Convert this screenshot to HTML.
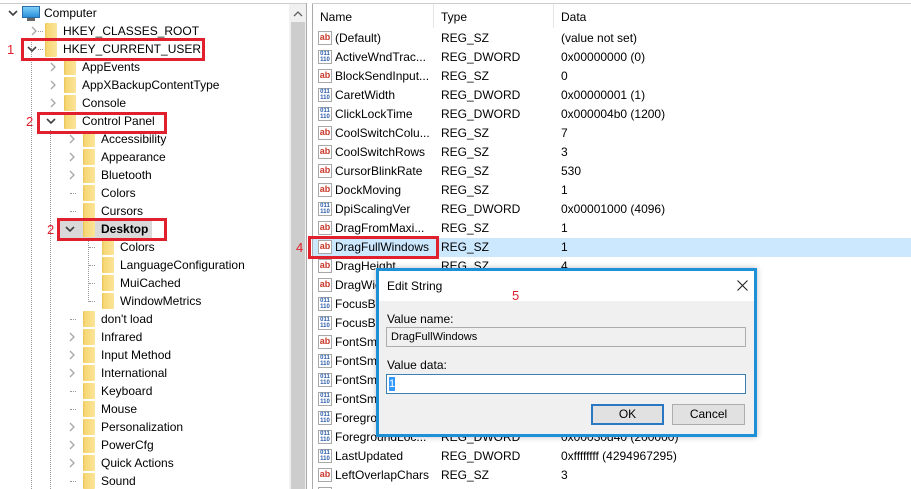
<!DOCTYPE html>
<html><head><meta charset="utf-8"><style>
*{margin:0;padding:0;box-sizing:border-box}
html{width:911px;height:489px;overflow:hidden}
body{width:911px;height:489px;overflow:hidden;background:#fff;font-family:"Liberation Sans",sans-serif;font-size:12px;color:#000;position:relative}
.a{position:absolute;white-space:nowrap}
.t{position:absolute;white-space:nowrap;line-height:18px;height:18px}
.f{position:absolute;width:12px;height:16px;background:linear-gradient(90deg,#e8c25a 0,#f7d774 2px,#fbe49a 100%);border-radius:1px}
.c{position:absolute;width:8px;height:10px}
.e{position:absolute;width:10px;height:8px}
.dot{position:absolute;border-top:1px dotted #999;width:6px}
.vd{position:absolute;border-left:1px dotted #999}
.r{position:absolute;height:19px;line-height:19px;white-space:nowrap}
.ic{position:absolute;width:14px;height:14px;top:2px;border:1px solid #a8a8a8;background:#fff;font-size:9px;font-weight:bold;line-height:11px;text-align:center}
.ab{color:#c8382a}
.dw{color:#2a5aa8;font-size:6px;line-height:6px}
.red{position:absolute;border:3px solid #e0202c}
.num{position:absolute;color:#e0202c;font-size:13px}
</style></head><body>
<svg width="0" height="0" style="position:absolute"><defs>
<symbol id="col" viewBox="0 0 8 10"><path d="M2 1 L6 5 L2 9" fill="none" stroke="#a6a6a6" stroke-width="1.3"/></symbol>
<symbol id="exp" viewBox="0 0 10 8"><path d="M1 2 L5 6 L9 2" fill="none" stroke="#404040" stroke-width="1.6"/></symbol>
</defs></svg>
<!-- frame -->
<div class="a" style="left:0;top:3px;width:307px;height:1px;background:#ccc"></div>
<div class="a" style="left:289px;top:4px;width:17px;height:485px;background:#f0f0f0"></div>
<div class="a" style="left:291px;top:22px;width:14px;height:467px;background:#cdcdcd"></div>
<svg class="a" style="left:293px;top:11px" width="10" height="6"><path d="M1 5 L5 1 L9 5" fill="none" stroke="#606060" stroke-width="1.3"/></svg>
<div class="a" style="left:306px;top:3px;width:1px;height:486px;background:#aaa"></div>
<div class="a" style="left:312px;top:3px;width:1px;height:486px;background:#aaa"></div>
<div class="a" style="left:312px;top:3px;width:599px;height:1px;background:#ccc"></div>

<!-- tree lines -->
<div class="vd" style="left:31px;top:40px;height:449px"></div>
<div class="vd" style="left:50px;top:130px;height:359px"></div>
<div class="vd" style="left:88px;top:238px;height:64px"></div>

<!-- tree -->
<svg class="e" style="left:8px;top:9px"><use href="#exp"/></svg>
<div class="a" style="left:22px;top:6px;width:18px;height:12px;background:linear-gradient(#7fd0f7,#2b90d9);border:1px solid #2a6ca8"></div>
<div class="a" style="left:27px;top:18px;width:8px;height:3px;background:#666"></div>
<div class="t" style="left:44px;top:4px">Computer</div>

<div class="a" style="left:57px;top:220px;width:95px;height:18px;background:#d9d9d9"></div>

<svg class="c" style="left:30px;top:26px"><use href="#col"/></svg><div class="dot" style="left:38px;top:31px;width:5px"></div><div class="f" style="left:45px;top:23px"></div><div class="t" style="left:63px;top:22px">HKEY_CLASSES_ROOT</div>
<svg class="e" style="left:27px;top:45px"><use href="#exp"/></svg><div class="dot" style="left:38px;top:49px;width:5px"></div><div class="f" style="left:45px;top:41px"></div><div class="t" style="left:63px;top:40px">HKEY_CURRENT_USER</div>

<svg class="c" style="left:49px;top:62px"><use href="#col"/></svg><div class="f" style="left:64px;top:59px"></div><div class="t" style="left:82px;top:58px">AppEvents</div>
<svg class="c" style="left:49px;top:80px"><use href="#col"/></svg><div class="f" style="left:64px;top:77px"></div><div class="t" style="left:82px;top:76px">AppXBackupContentType</div>
<svg class="c" style="left:49px;top:98px"><use href="#col"/></svg><div class="f" style="left:64px;top:95px"></div><div class="t" style="left:82px;top:94px">Console</div>
<svg class="e" style="left:46px;top:117px"><use href="#exp"/></svg><div class="f" style="left:64px;top:113px"></div><div class="t" style="left:82px;top:112px">Control Panel</div>

<svg class="c" style="left:68px;top:134px"><use href="#col"/></svg><div class="f" style="left:83px;top:131px"></div><div class="t" style="left:101px;top:130px">Accessibility</div>
<svg class="c" style="left:68px;top:152px"><use href="#col"/></svg><div class="f" style="left:83px;top:149px"></div><div class="t" style="left:101px;top:148px">Appearance</div>
<svg class="c" style="left:68px;top:170px"><use href="#col"/></svg><div class="f" style="left:83px;top:167px"></div><div class="t" style="left:101px;top:166px">Bluetooth</div>
<div class="dot" style="left:70px;top:193px"></div><div class="f" style="left:83px;top:185px"></div><div class="t" style="left:101px;top:184px">Colors</div>
<div class="dot" style="left:70px;top:211px"></div><div class="f" style="left:83px;top:203px"></div><div class="t" style="left:101px;top:202px">Cursors</div>
<svg class="e" style="left:65px;top:225px"><use href="#exp"/></svg><div class="f" style="left:83px;top:221px"></div><div class="t" style="left:101px;top:220px;font-weight:bold">Desktop</div>

<div class="dot" style="left:89px;top:247px"></div><div class="f" style="left:102px;top:239px"></div><div class="t" style="left:120px;top:238px">Colors</div>
<div class="dot" style="left:89px;top:265px"></div><div class="f" style="left:102px;top:257px"></div><div class="t" style="left:120px;top:256px">LanguageConfiguration</div>
<div class="dot" style="left:89px;top:283px"></div><div class="f" style="left:102px;top:275px"></div><div class="t" style="left:120px;top:274px">MuiCached</div>
<div class="dot" style="left:89px;top:301px"></div><div class="f" style="left:102px;top:293px"></div><div class="t" style="left:120px;top:292px">WindowMetrics</div>

<div class="dot" style="left:70px;top:319px"></div><div class="f" style="left:83px;top:311px"></div><div class="t" style="left:101px;top:310px">don't load</div>
<svg class="c" style="left:68px;top:332px"><use href="#col"/></svg><div class="f" style="left:83px;top:329px"></div><div class="t" style="left:101px;top:328px">Infrared</div>
<svg class="c" style="left:68px;top:350px"><use href="#col"/></svg><div class="f" style="left:83px;top:347px"></div><div class="t" style="left:101px;top:346px">Input Method</div>
<svg class="c" style="left:68px;top:368px"><use href="#col"/></svg><div class="f" style="left:83px;top:365px"></div><div class="t" style="left:101px;top:364px">International</div>
<div class="dot" style="left:70px;top:391px"></div><div class="f" style="left:83px;top:383px"></div><div class="t" style="left:101px;top:382px">Keyboard</div>
<div class="dot" style="left:70px;top:409px"></div><div class="f" style="left:83px;top:401px"></div><div class="t" style="left:101px;top:400px">Mouse</div>
<svg class="c" style="left:68px;top:422px"><use href="#col"/></svg><div class="f" style="left:83px;top:419px"></div><div class="t" style="left:101px;top:418px">Personalization</div>
<svg class="c" style="left:68px;top:440px"><use href="#col"/></svg><div class="f" style="left:83px;top:437px"></div><div class="t" style="left:101px;top:436px">PowerCfg</div>
<svg class="c" style="left:68px;top:458px"><use href="#col"/></svg><div class="f" style="left:83px;top:455px"></div><div class="t" style="left:101px;top:454px">Quick Actions</div>
<div class="dot" style="left:70px;top:481px"></div><div class="f" style="left:83px;top:473px"></div><div class="t" style="left:101px;top:472px">Sound</div>

<!-- right pane header -->
<div class="a" style="left:433px;top:4px;width:1px;height:24px;background:#e5e5e5"></div>
<div class="a" style="left:553px;top:4px;width:1px;height:24px;background:#e5e5e5"></div>
<div class="a" style="left:320px;top:10px">Name</div>
<div class="a" style="left:441px;top:10px">Type</div>
<div class="a" style="left:561px;top:10px">Data</div>

<div class="a" style="left:313px;top:238px;width:598px;height:19px;background:#cce8ff"></div>

<div style="position:absolute;left:0;top:29px;width:911px;height:460px;overflow:hidden">
<div class="r" style="left:318px;top:0"><span class="ic ab">ab</span><span style="margin-left:17px">(Default)</span></div>
<div class="r" style="left:318px;top:19px"><span class="ic dw">011<br>110</span><span style="margin-left:17px">ActiveWndTrac...</span></div>
<div class="r" style="left:318px;top:38px"><span class="ic ab">ab</span><span style="margin-left:17px">BlockSendInput...</span></div>
<div class="r" style="left:318px;top:57px"><span class="ic dw">011<br>110</span><span style="margin-left:17px">CaretWidth</span></div>
<div class="r" style="left:318px;top:76px"><span class="ic dw">011<br>110</span><span style="margin-left:17px">ClickLockTime</span></div>
<div class="r" style="left:318px;top:95px"><span class="ic ab">ab</span><span style="margin-left:17px">CoolSwitchColu...</span></div>
<div class="r" style="left:318px;top:114px"><span class="ic ab">ab</span><span style="margin-left:17px">CoolSwitchRows</span></div>
<div class="r" style="left:318px;top:133px"><span class="ic ab">ab</span><span style="margin-left:17px">CursorBlinkRate</span></div>
<div class="r" style="left:318px;top:152px"><span class="ic ab">ab</span><span style="margin-left:17px">DockMoving</span></div>
<div class="r" style="left:318px;top:171px"><span class="ic dw">011<br>110</span><span style="margin-left:17px">DpiScalingVer</span></div>
<div class="r" style="left:318px;top:190px"><span class="ic ab">ab</span><span style="margin-left:17px">DragFromMaxi...</span></div>
<div class="r" style="left:318px;top:209px"><span class="ic ab">ab</span><span style="margin-left:17px">DragFullWindows</span></div>
<div class="r" style="left:318px;top:228px"><span class="ic ab">ab</span><span style="margin-left:17px">DragHeight</span></div>
<div class="r" style="left:318px;top:247px"><span class="ic ab">ab</span><span style="margin-left:17px">DragWidth</span></div>
<div class="r" style="left:318px;top:266px"><span class="ic dw">011<br>110</span><span style="margin-left:17px">FocusBorder</span></div>
<div class="r" style="left:318px;top:285px"><span class="ic dw">011<br>110</span><span style="margin-left:17px">FocusBorder</span></div>
<div class="r" style="left:318px;top:304px"><span class="ic ab">ab</span><span style="margin-left:17px">FontSmooth</span></div>
<div class="r" style="left:318px;top:323px"><span class="ic dw">011<br>110</span><span style="margin-left:17px">FontSmooth</span></div>
<div class="r" style="left:318px;top:342px"><span class="ic dw">011<br>110</span><span style="margin-left:17px">FontSmooth</span></div>
<div class="r" style="left:318px;top:361px"><span class="ic dw">011<br>110</span><span style="margin-left:17px">FontSmooth</span></div>
<div class="r" style="left:318px;top:380px"><span class="ic dw">011<br>110</span><span style="margin-left:17px">Foreground</span></div>
<div class="r" style="left:318px;top:399px"><span class="ic dw">011<br>110</span><span style="margin-left:17px">ForegroundLoc...</span></div>
<div class="r" style="left:318px;top:418px"><span class="ic dw">011<br>110</span><span style="margin-left:17px">LastUpdated</span></div>
<div class="r" style="left:318px;top:437px"><span class="ic ab">ab</span><span style="margin-left:17px">LeftOverlapChars</span></div>
<div class="r" style="left:318px;top:456px"><span class="ic ab">ab</span></div>

<div class="r" style="left:441px;top:0">REG_SZ</div><div class="r" style="left:561px;top:0">(value not set)</div>
<div class="r" style="left:441px;top:19px">REG_DWORD</div><div class="r" style="left:561px;top:19px">0x00000000 (0)</div>
<div class="r" style="left:441px;top:38px">REG_SZ</div><div class="r" style="left:561px;top:38px">0</div>
<div class="r" style="left:441px;top:57px">REG_DWORD</div><div class="r" style="left:561px;top:57px">0x00000001 (1)</div>
<div class="r" style="left:441px;top:76px">REG_DWORD</div><div class="r" style="left:561px;top:76px">0x000004b0 (1200)</div>
<div class="r" style="left:441px;top:95px">REG_SZ</div><div class="r" style="left:561px;top:95px">7</div>
<div class="r" style="left:441px;top:114px">REG_SZ</div><div class="r" style="left:561px;top:114px">3</div>
<div class="r" style="left:441px;top:133px">REG_SZ</div><div class="r" style="left:561px;top:133px">530</div>
<div class="r" style="left:441px;top:152px">REG_SZ</div><div class="r" style="left:561px;top:152px">1</div>
<div class="r" style="left:441px;top:171px">REG_DWORD</div><div class="r" style="left:561px;top:171px">0x00001000 (4096)</div>
<div class="r" style="left:441px;top:190px">REG_SZ</div><div class="r" style="left:561px;top:190px">1</div>
<div class="r" style="left:441px;top:209px">REG_SZ</div><div class="r" style="left:561px;top:209px">1</div>
<div class="r" style="left:441px;top:228px">REG_SZ</div><div class="r" style="left:561px;top:228px">4</div>
<div class="r" style="left:441px;top:399px">REG_DWORD</div><div class="r" style="left:561px;top:399px">0x00030d40 (200000)</div>
<div class="r" style="left:441px;top:418px">REG_DWORD</div><div class="r" style="left:561px;top:418px">0xffffffff (4294967295)</div>
<div class="r" style="left:441px;top:437px">REG_SZ</div><div class="r" style="left:561px;top:437px">3</div>
</div>

<!-- red annotations -->
<div class="red" style="left:21px;top:38px;width:184px;height:23px"></div>
<div class="red" style="left:37px;top:112px;width:130px;height:22px"></div>
<div class="red" style="left:57px;top:218px;width:110px;height:23px"></div>
<div class="red" style="left:308px;top:236px;width:131px;height:23px"></div>
<div class="num" style="left:7px;top:42px">1</div>
<div class="num" style="left:26px;top:114px">2</div>
<div class="num" style="left:47px;top:222px">2</div>
<div class="num" style="left:296px;top:240px">4</div>

<!-- dialog -->
<div class="a" style="left:376px;top:268px;width:381px;height:169px;background:#f0f0f0;border:3px solid #1e90d8;box-shadow:0 0 6px rgba(0,0,0,.25)">
  <div class="a" style="left:0;top:0;width:375px;height:30px;background:#fff"></div>
  <div class="a" style="left:8px;top:8px;font-size:12px">Edit String</div>
  <div class="num" style="left:133px;top:17px">5</div>
  <svg class="a" style="left:358px;top:9px" width="11" height="11"><path d="M0.5 0.5 L10.5 10.5 M10.5 0.5 L0.5 10.5" stroke="#222" stroke-width="1.1"/></svg>
  <div class="a" style="left:8px;top:41px">Value name:</div>
  <div class="a" style="left:7px;top:56px;width:360px;height:20px;background:#f0f0f0;border:1px solid #adadad;padding:3px 4px;font-size:11px">DragFullWindows</div>
  <div class="a" style="left:8px;top:87px">Value data:</div>
  <div class="a" style="left:7px;top:103px;width:360px;height:20px;background:#fff;border:1px solid #3c7fb1"></div>
  <div class="a" style="left:10px;top:106px;width:6px;height:14px;background:#3399ff;color:#fff;font-size:11px;line-height:14px">1</div>
  <div class="a" style="left:212px;top:133px;width:73px;height:21px;background:#e1e1e1;border:2px solid #2a78c4;text-align:center;line-height:17px">OK</div>
  <div class="a" style="left:293px;top:133px;width:73px;height:21px;background:#e1e1e1;border:1px solid #adadad;text-align:center;line-height:19px">Cancel</div>
</div>
</body></html>
